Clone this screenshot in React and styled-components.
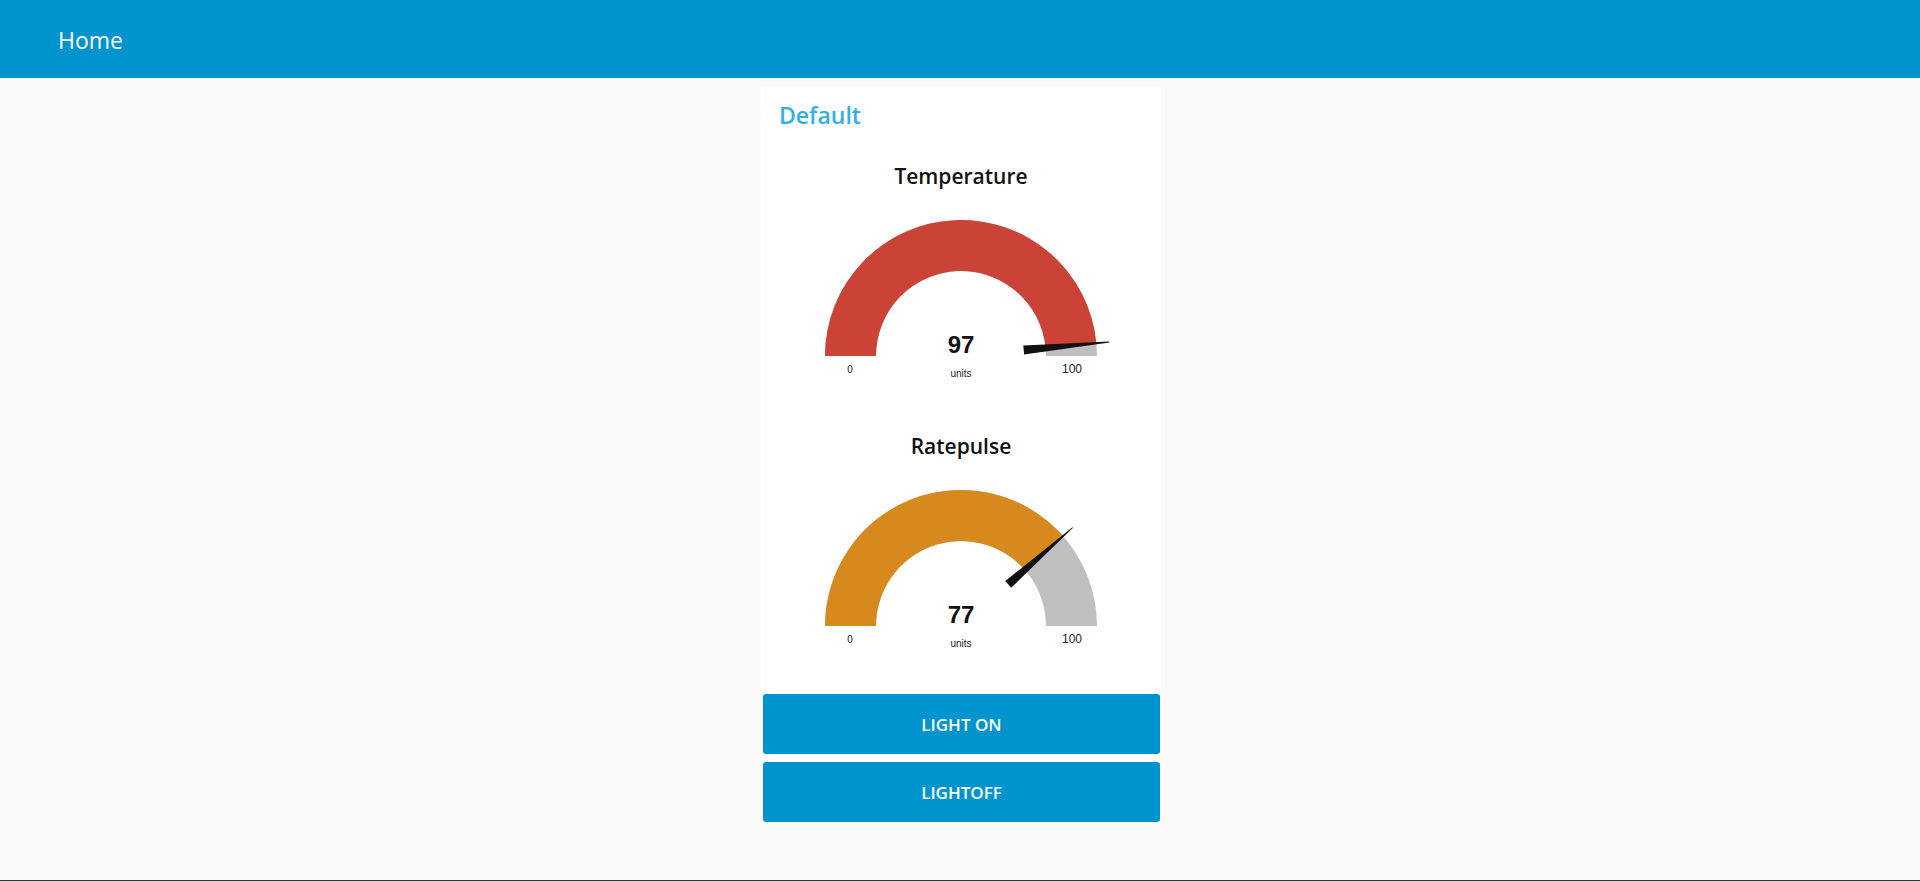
import styled, { createGlobalStyle } from 'styled-components';

const GlobalStyle = createGlobalStyle`
    html, body {
        margin: 0;
        padding: 0;
        background: #fafafa;
    }
    * {
        box-sizing: border-box;
    }
`;

const gauges = [
    { title: 'Temperature', value: 97, color: '#ca4336' },
    { title: 'Ratepulse', value: 77, color: '#d6891d' },
];

const CX = 200;
const CY = 165;
const R_OUT = 136;
const R_IN = 85;

function pt(r, a) {
    return [CX - r * Math.cos(a), CY - r * Math.sin(a)];
}

function ringPath(a0, a1) {
    const [x0, y0] = pt(R_OUT, a0);
    const [x1, y1] = pt(R_OUT, a1);
    const [x2, y2] = pt(R_IN, a1);
    const [x3, y3] = pt(R_IN, a0);
    const large = a1 - a0 > Math.PI ? 1 : 0;
    return `M${x0} ${y0} A${R_OUT} ${R_OUT} 0 ${large} 1 ${x1} ${y1} L${x2} ${y2} A${R_IN} ${R_IN} 0 ${large} 0 ${x3} ${y3} Z`;
}

function needlePath(a) {
    const ux = -Math.cos(a);
    const uy = -Math.sin(a);
    const px = -uy;
    const py = ux;
    const b = 63, t = 149, bw = 4.5, tw = 0.4;
    const p1 = [CX + ux * b + px * bw, CY + uy * b + py * bw];
    const p2 = [CX + ux * t + px * tw, CY + uy * t + py * tw];
    const p3 = [CX + ux * t - px * tw, CY + uy * t - py * tw];
    const p4 = [CX + ux * b - px * bw, CY + uy * b - py * bw];
    return `M${p1.join(' ')} L${p2.join(' ')} L${p3.join(' ')} L${p4.join(' ')} Z`;
}

function Gauge({ title, value, color }) {
    const a = Math.PI * value / 100;
    return (
        <Widget>
            <GaugeTitle>{title}</GaugeTitle>
            <svg width="400" height="215" viewBox="0 0 400 215">
                <path d={ringPath(0, Math.PI)} fill="#bfbfbf" />
                <path d={ringPath(0, a)} fill={color} />
                <path d={needlePath(a)} fill="#111" />
                <GaugeValue x={CX} y={CY - 3} textAnchor="middle">{value}</GaugeValue>
                <GaugeSmall x={CX} y={CY + 21} textAnchor="middle">units</GaugeSmall>
                <GaugeSmall x={CX - 111} y={CY + 17} textAnchor="middle">0</GaugeSmall>
                <GaugeMax x={CX + 111} y={CY + 17} textAnchor="middle">100</GaugeMax>
            </svg>
        </Widget>
    );
}

export default function App() {
    return (
        <Page>
            <GlobalStyle />
            <Toolbar>
                <ToolbarTitle>Home</ToolbarTitle>
            </Toolbar>
            <Content>
                <Group>
                    <GroupTitle>Default</GroupTitle>
                    {gauges.map((g) => (
                        <Gauge key={g.title} {...g} />
                    ))}
                    <Buttons>
                        <Button>LIGHT ON</Button>
                        <Button>LIGHTOFF</Button>
                    </Buttons>
                </Group>
            </Content>
        </Page>
    );
}

const Page = styled.div`
    height: 881px;
    border-bottom: 1px solid #333;
    background: #fafafa;
    font-family: "Open Sans", "Noto Sans", sans-serif;
    overflow: hidden;
`;

const Toolbar = styled.header`
    height: 78px;
    background: #0094ce;
    display: flex;
    align-items: center;
    padding-left: 58px;
`;

const ToolbarTitle = styled.h1`
    margin: 0;
    color: #fff;
    font-size: 23px;
    font-weight: 400;
    padding-top: 2px;
`;

const Content = styled.main`
    display: flex;
    justify-content: center;
    padding-top: 8px;
    padding-left: 2px;
`;

const Group = styled.section`
    width: 400px;
    background: #fff;
    display: flex;
    flex-direction: column;
    padding-bottom: 2px;
`;

const GroupTitle = styled.h2`
    margin: 0;
    height: 50px;
    padding: 14px 0 0 18px;
    color: #31b0e6;
    font-size: 23px;
    font-weight: 600;
    line-height: 30px;
`;

const Widget = styled.div`
    height: 270px;
    display: flex;
    flex-direction: column;
    align-items: center;
`;

const GaugeTitle = styled.h3`
    margin: 25px 0 0;
    font-size: 21px;
    font-weight: 600;
    line-height: 30px;
    color: #111;
`;

const GaugeValue = styled.text`
    font-family: "Liberation Sans", Arial, sans-serif;
    font-size: 24px;
    font-weight: 700;
    fill: #111;
`;

const GaugeSmall = styled.text`
    font-family: "Liberation Sans", Arial, sans-serif;
    font-size: 10px;
    fill: #222;
`;

const GaugeMax = styled.text`
    font-family: "Liberation Sans", Arial, sans-serif;
    font-size: 12px;
    fill: #222;
`;

const Buttons = styled.div`
    display: flex;
    flex-direction: column;
    gap: 8px;
    margin-top: 18px;
    padding: 0 1px 0 2px;
`;

const Button = styled.button`
    height: 60px;
    border: none;
    border-radius: 3px;
    background: #0094ce;
    color: #fff;
    font-family: "Open Sans", "Noto Sans", sans-serif;
    font-size: 17px;
    font-weight: 600;
    cursor: pointer;
`;
